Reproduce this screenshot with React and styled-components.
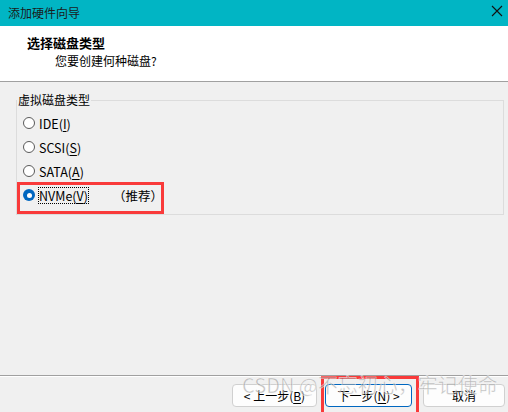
import React from "react";
import styled, { createGlobalStyle } from "styled-components";

const GlobalStyle = createGlobalStyle`
  html, body {
    margin: 0;
    padding: 0;
    background: #f0f0f0;
  }
  body {
    font-family: "Noto Sans CJK SC", "Noto Sans", sans-serif;
    font-size: 12px;
    color: #000;
  }
`;

const Window = styled.div`
  position: relative;
  width: 508px;
  height: 412px;
  display: flex;
  flex-direction: column;
  overflow: hidden;
  background: #f0f0f0;
`;

const TitleBar = styled.div`
  height: 26px;
  flex: none;
  background: #01b5c4;
  display: flex;
  align-items: center;
  justify-content: space-between;
  padding: 0 3px 0 8px;
  color: #1b1b1b;
  font-size: 12px;
  line-height: 16px;
`;

const CloseIcon = styled.svg`
  width: 12px;
  height: 12px;
  margin-top: -5px;
  margin-right: 2px;
`;

const Header = styled.div`
  height: 56px;
  flex: none;
  background: #fff;
  border-bottom: 1px solid #a0a0a0;
  padding: 8px 0 0 27px;
  box-sizing: border-box;
`;

const HeaderTitle = styled.div`
  font-weight: bold;
  font-size: 13px;
  line-height: 17px;
`;

const HeaderSub = styled.div`
  padding-left: 28px;
  line-height: 16px;
  margin-top: 2px;
`;

const Body = styled.div`
  flex: 1;
  padding: 10px 4px 0 16px;
`;

const GroupBox = styled.fieldset`
  margin: 0;
  padding: 3px 0 7px 0;
  border: 1px solid #dcdcdc;
  min-width: 0;
`;

const Legend = styled.legend`
  padding: 0 1px;
  margin-left: 0;
  line-height: 16px;
  font-size: 12px;
`;

const Option = styled.label`
  position: relative;
  display: flex;
  align-items: center;
  height: 24px;
  padding-left: 6px;
`;

const Radio = styled.span`
  width: 12px;
  height: 12px;
  box-sizing: border-box;
  border-radius: 50%;
  flex: none;
  border: ${(p) => (p.checked ? "none" : "1px solid #5a5a5a")};
  background: ${(p) => (p.checked ? "#0067c0" : "#fff")};
  display: flex;
  align-items: center;
  justify-content: center;

  &::after {
    content: "";
    display: ${(p) => (p.checked ? "block" : "none")};
    width: 5px;
    height: 5px;
    border-radius: 50%;
    background: #fff;
  }
`;

const LabelText = styled.span`
  margin-left: 4px;
  line-height: 15px;
  font-size: 12.5px;
  outline: ${(p) => (p.focused ? "1px dotted #000" : "none")};
  outline-offset: 0;
`;

const Key = styled.u`
  text-decoration-thickness: 1px;
  text-underline-offset: 2px;
`;

const Hint = styled.span`
  margin-left: 25px;
  font-size: 12.5px;
`;

const Mark = styled.div`
  position: absolute;
  top: ${(p) => p.top}px;
  left: ${(p) => p.left}px;
  width: ${(p) => p.w}px;
  height: ${(p) => p.h}px;
  border: 3px solid #f93a3a;
  box-sizing: border-box;
  pointer-events: none;
`;

const Footer = styled.div`
  height: 37px;
  flex: none;
  border-top: 1px solid #a0a0a0;
  box-shadow: inset 0 1px 0 #fff;
  display: flex;
  align-items: flex-start;
  justify-content: flex-end;
  padding: 8px 3px 0 0;
  box-sizing: border-box;
`;

const Button = styled.button`
  position: relative;
  width: ${(p) => p.w}px;
  height: 23px;
  margin-left: ${(p) => p.gap}px;
  padding: 0;
  box-sizing: border-box;
  border-radius: 4px;
  background: #fdfdfd;
  border: 1px solid ${(p) => (p.focused ? "#0067c0" : "#d0d0d0")};
  font-family: "Noto Sans CJK SC", sans-serif;
  font-size: 12px;
  line-height: 16px;
  color: #000;
`;

const Watermark = styled.div`
  position: absolute;
  left: 242px;
  top: 372px;
  font-family: "Noto Sans CJK SC", "Noto Sans", sans-serif;
  font-size: 20px;
  line-height: 26px;
  color: rgba(120, 120, 120, 0.45);
  -webkit-text-stroke: 0.6px rgba(255, 255, 255, 0.7);
  white-space: nowrap;
  pointer-events: none;
`;

const options = [
  { label: "IDE", key: "I" },
  { label: "SCSI", key: "S" },
  { label: "SATA", key: "A" },
];

export default function App() {
  return (
    <Window>
      <GlobalStyle />
      <TitleBar>
        <span>添加硬件向导</span>
        <CloseIcon viewBox="0 0 12 12">
          <path d="M1 1 L11 11 M11 1 L1 11" stroke="#111" strokeWidth="1.1" />
        </CloseIcon>
      </TitleBar>
      <Header>
        <HeaderTitle>选择磁盘类型</HeaderTitle>
        <HeaderSub>您要创建何种磁盘?</HeaderSub>
      </Header>
      <Body>
        <GroupBox>
          <Legend>虚拟磁盘类型</Legend>
          {options.map((o) => (
            <Option key={o.label}>
              <Radio />
              <LabelText>
                {o.label}(<Key>{o.key}</Key>)
              </LabelText>
            </Option>
          ))}
          <Option>
            <Radio checked />
            <LabelText focused>
              NVMe(<Key>V</Key>)
            </LabelText>
            <Hint>（推荐）</Hint>
            <Mark top={-1} left={0} w={147} h={32} />
          </Option>
        </GroupBox>
      </Body>
      <Footer>
        <Button w={85} gap={0}>
          &lt; 上一步(<Key>B</Key>)
        </Button>
        <Button w={87} gap={8} focused>
          下一步(<Key>N</Key>) &gt;
          <Mark top={-9} left={-5} w={98} h={50} />
        </Button>
        <Button w={82} gap={11}>
          取消
        </Button>
      </Footer>
      <Watermark>CSDN @不忘初心，牢记使命</Watermark>
    </Window>
  );
}
